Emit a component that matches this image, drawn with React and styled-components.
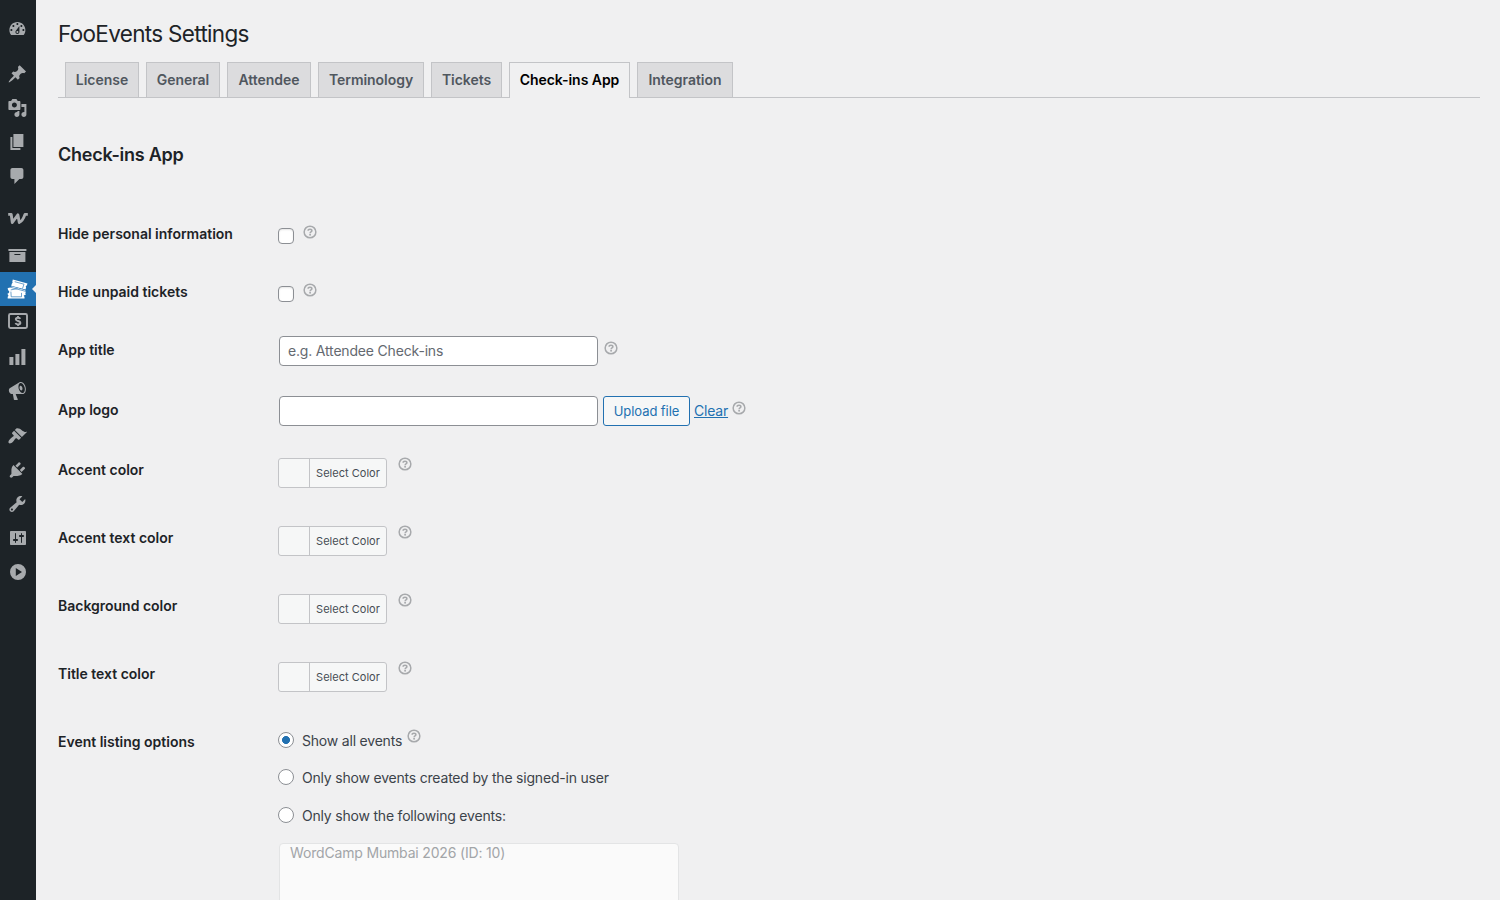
import React, { useState } from 'react'
import styled, { createGlobalStyle, css } from 'styled-components'

const GlobalStyle = createGlobalStyle`
    *, *::before, *::after{
        box-sizing: border-box;
    }
    body{
        margin: 0;
        height: 900px;
        overflow: hidden;
        background-color: #f0f0f1;
        color: #3c434a;
        font-family: Inter, "Liberation Sans", sans-serif;
        font-size: 14px;
        line-height: 1.4;
    }
`

const icons = {
    dashboard: 'M3.76 16h12.48c1.1-1.37 1.76-3.11 1.76-5 0-4.42-3.58-8-8-8s-8 3.58-8 8c0 1.89.66 3.63 1.76 5zM10 4c.55 0 1 .45 1 1s-.45 1-1 1-1-.45-1-1 .45-1 1-1zM6 6c.55 0 1 .45 1 1s-.45 1-1 1-1-.45-1-1 .45-1 1-1zm8 0c.55 0 1 .45 1 1s-.45 1-1 1-1-.45-1-1 .45-1 1-1zm-5.37 5.55L12 7v6c0 1.1-.9 2-2 2s-2-.9-2-2c0-.57.24-1.08.63-1.45zM4 10c.55 0 1 .45 1 1s-.45 1-1 1-1-.45-1-1 .45-1 1-1zm12 0c.55 0 1 .45 1 1s-.45 1-1 1-1-.45-1-1 .45-1 1-1zm-5 3c0-.55-.45-1-1-1s-1 .45-1 1 .45 1 1 1 1-.45 1-1z',
    posts: 'M10.44 3.02l1.82-1.82 6.36 6.35-1.83 1.82c-1.05-.68-2.48-.57-3.41.36l-.75.75c-.92.93-1.04 2.35-.35 3.41l-1.83 1.82-2.41-2.41-2.8 2.79c-.42.42-3.38 2.71-3.8 2.29s1.86-3.39 2.28-3.81l2.79-2.79L4.1 9.36l1.83-1.82c1.05.69 2.48.57 3.4-.36l.75-.75c.93-.92 1.05-2.35.36-3.41z',
    media: 'M13 11V4c0-.55-.45-1-1-1h-1.67L9 1H5L3.67 3H2c-.55 0-1 .45-1 1v7c0 .55.45 1 1 1h10c.55 0 1-.45 1-1zM7 4.5c1.38 0 2.5 1.12 2.5 2.5S8.38 9.5 7 9.500 4.500 8.380 4.500 7 5.620 4.500 7 4.500zM14 6h5v10.500c0 1.380-1.120 2.500-2.500 2.500S14 17.880 14 16.500s1.120-2.500 2.500-2.500c.170 0 .340.020.500.050V9h-3V6zm-4 8.050V13h2v3.500c0 1.380-1.120 2.500-2.500 2.500S7 17.880 7 16.500 8.120 14 9.500 14c.170 0 .340.020.500.050z',
    pages: 'M6 15V2h10v13H6zm-1 1h8v2H3V5h2v11z',
    comments: 'M5 2h9c1.1 0 2 .9 2 2v7c0 1.1-.9 2-2 2h-2l-5 5v-5H5c-1.1 0-2-.9-2-2V4c0-1.1.9-2 2-2z',
    products: 'M19 4v2H1V4h18zM2 7h16v10H2V7zm11 3V9H7v1h6z',
    analytics: 'M18 18V2h-4v16h4zm-6 0V7H8v11h4zm-6 0v-8H2v8h4z',
    marketing: 'M18.15 5.94c.46 1.62.38 3.22-.02 4.48-.42 1.28-1.26 2.18-2.3 2.48-.16.06-.26.06-.4.06-.06.02-.12.02-.18.02-.06.02-.14.02-.22.02h-6.8l2.22 5.5c.02.14-.06.26-.14.34-.08.1-.24.16-.34.16H6.95c-.1 0-.26-.06-.34-.16-.08-.08-.16-.2-.14-.34l-1-5.5H4.25l-.02-.02c-.5.06-1.08-.18-1.54-.62s-.88-1.08-1.06-1.88c-.24-.8-.2-1.56-.02-2.2.18-.62.58-1.08 1.06-1.3l.02-.02 9-5.4c.1-.06.18-.1.24-.16.06-.04.14-.08.24-.12.16-.08.28-.12.5-.18 1.04-.3 2.24.1 3.22.98s1.84 2.24 2.26 3.86zm-2.58 5.98h-.02c.4-.1.74-.34 1.04-.7.58-.7.86-1.76.86-3.04 0-.64-.1-1.3-.28-1.98-.34-1.36-1.02-2.5-1.78-3.24s-1.68-1.1-2.46-.88c-.82.22-1.4.96-1.7 2-.32 1.04-.28 2.36.06 3.72.38 1.36 1 2.5 1.8 3.24.78.74 1.62 1.1 2.48.88zm-2.54-7.08c.22-.04.42-.02.62.04.38.16.76.48 1.02 1s.42 1.2.42 1.78c0 .3-.04.56-.12.8-.18.48-.44.84-.86.94-.34.1-.8-.06-1.14-.4s-.64-.86-.78-1.5c-.18-.62-.12-1.24.02-1.72s.48-.84.82-.94z',
    appearance: 'M14.48 11.06L7.41 3.99l1.5-1.5c.5-.56 2.3-.47 3.51.32 1.21.8 1.43 1.28 2.91 2.1 1.18.64 2.45 1.26 4.45.85zm-.71.71L6.7 4.7 4.93 6.47c-.39.39-.39 1.02 0 1.41l1.06 1.06c.39.39.39 1.03 0 1.42-.6.6-1.43 1.11-2.21 1.69-.35.26-.7.53-1.01.84C1.43 14.23.4 16.08 1.4 17.07c.99 1 2.84-.03 4.18-1.36.31-.31.58-.66.85-1.02.57-.78 1.08-1.61 1.69-2.21.39-.39 1.02-.39 1.41 0l1.06 1.06c.39.39 1.02.39 1.41 0z',
    plugins: 'M13.11 4.36L9.87 7.6 8 5.73l3.24-3.24c.35-.34 1.05-.2 1.56.32.52.51.66 1.21.31 1.55zm-8 1.77l.91-1.12 9.01 9.01-1.19.84c-.71.71-2.63 1.16-3.82 1.16H6.14L4.9 17.26c-.59.59-1.54.59-2.12 0-.59-.58-.59-1.53 0-2.12l1.24-1.24v-3.88c0-1.13.4-3.19 1.09-3.89zm7.26 3.97l3.24-3.24c.34-.35 1.04-.21 1.55.31.52.51.66 1.21.31 1.55l-3.24 3.25z',
    tools: 'M16.68 9.77c-1.34 1.34-3.3 1.67-4.95.99l-5.41 6.52c-.99.99-2.59.99-3.58 0s-.99-2.59 0-3.57l6.52-5.42c-.68-1.65-.35-3.61.99-4.95 1.28-1.28 3.12-1.62 4.72-1.06l-2.89 2.89 2.82 2.82 2.86-2.87c.53 1.58.18 3.39-1.08 4.65zM3.81 16.21c.4.39 1.04.39 1.43 0 .4-.4.4-1.04 0-1.43-.39-.4-1.03-.4-1.43 0-.39.39-.39 1.03 0 1.43z',
    settings: 'M18 16V4c0-.55-.45-1-1-1H3c-.55 0-1 .45-1 1v12c0 .55.45 1 1 1h14c.55 0 1-.45 1-1zM8 11h1c.55 0 1 .45 1 1s-.45 1-1 1H8v1.5c0 .28-.22.5-.5.5s-.5-.22-.5-.5V13H6c-.55 0-1-.45-1-1s.45-1 1-1h1V5.5c0-.28.22-.5.5-.5s.5.22.5.5V11zm5-2h-1c-.55 0-1-.45-1-1s.45-1 1-1h1V5.5c0-.28.22-.5.5-.5s.5.22.5.5V7h1c.55 0 1 .45 1 1s-.45 1-1 1h-1v5.5c0 .28-.22.5-.5.5s-.5-.22-.5-.5V9z',
    collapse: 'M10 2a8 8 0 1 0 0 16 8 8 0 0 0 0-16zM7.8 5.9L14 10l-6.2 4.1z',
}

//every array is a block of the menu, blocks are split by a separator
const menu = [
    ['dashboard'],
    ['posts', 'media', 'pages', 'comments'],
    ['woo', 'products', 'tickets', 'payments', 'analytics', 'marketing'],
    ['appearance', 'plugins', 'tools', 'settings', 'collapse'],
]

//icons that sit a bit more to the right than the rest
const wideIcons = ['woo', 'payments', 'settings', 'collapse']

const tabs = [
    { name: 'License', width: 74 },
    { name: 'General', width: 74 },
    { name: 'Attendee', width: 84 },
    { name: 'Terminology', width: 106 },
    { name: 'Tickets', width: 71 },
    { name: 'Check-ins App', width: 121 },
    { name: 'Integration', width: 96 },
]

const colors = ['Accent color', 'Accent text color', 'Background color', 'Title text color']

const listing = [
    'Show all events',
    'Only show events created by the signed-in user',
    'Only show the following events:',
]

function WooIcon() {
    return (
        <svg width="20" height="20" viewBox="0 0 20 20" fill="none" stroke="currentColor" strokeWidth="2.9" strokeLinejoin="round">
            <path d="M.2 3.400H3.200L4.300 11.500 9.900 3.900 11.300 11.500C14 10.500 15.600 7.500 17 3.400H19.800" />
        </svg>
    )
}

function TicketsIcon() {
    return (
        <svg width="21" height="20" viewBox="0 0 21 20" fill="currentColor">
            <path d="M5.8.6l14.700 3.800-.7 2.100a1.200 1.200 0 0 0-.7 2l-.6 2L4.200 6.800l.7-2.200a1.300 1.300 0 0 0 .4-1.900z" />
            <path d="M.6 9.200L5 7.600l13.300 3.700.5 1.900a1.300 1.300 0 0 0 .2 2.100l-1.400 1L2 15.600l-.4-1.600a1.300 1.300 0 0 0-.4-2.400z" />
            <path d="M.7 14.300h16.800v1.100a1.300 1.300 0 0 0 0 2.300v1.700H.7v-1.700a1.300 1.300 0 0 0 0-2.300z" />
            <g fill="none" stroke="#2271b1" strokeWidth=".65">
                <path d="M7.700 2.700l9.300 2.500-1.500 4.300" />
                <path d="M2 7.900L18.800 12.400M3.700 10.900l7-1.300" />
                <path d="M3.900 12.600l.3 5.200h10.300v-3.900" />
            </g>
        </svg>
    )
}

function PaymentsIcon() {
    return (
        <svg width="20" height="16" viewBox="0 0 20 16" fill="none" stroke="currentColor">
            <rect x="1" y="1" width="18" height="14" rx="1.4" strokeWidth="1.9" />
            <path d="M12.300 5.900C12 5 11.200 4.700 10 4.700c-1.300 0-2.200.5-2.200 1.600 0 2.300 4.600 1.100 4.600 3.400 0 1.100-1 1.700-2.400 1.700-1.300 0-2.200-.5-2.500-1.400M10 3v1.700M10 11.400V13" strokeWidth="1.900" />
        </svg>
    )
}

function MenuIcon({ name }) {
    if (name === 'woo') return <WooIcon />
    if (name === 'tickets') return <TicketsIcon />
    if (name === 'payments') return <PaymentsIcon />
    return (
        <svg width="20" height="20" viewBox={wideIcons.includes(name) ? '0 0 20 20' : '-.4 0 20 20'} fill="currentColor" fillRule="evenodd">
            <path d={icons[name]} />
        </svg>
    )
}

function HelpTip() {
    return (
        <HelpStyled width="14" height="14" viewBox="0 0 14 14" fill="none" stroke="currentColor">
            <circle cx="7" cy="7" r="5.85" strokeWidth="1.5" />
            <path d="M5.100 5.800C5.100 4.700 5.900 4.200 7 4.200s1.900.6 1.900 1.500c0 1.200-1.800 1.300-1.800 2.500" strokeWidth="1.500" />
            <circle cx="7.100" cy="9.800" r=".95" fill="currentColor" stroke="none" />
        </HelpStyled>
    )
}

function App() {
    //state
    const [activeTab, setActiveTab] = useState('Check-ins App')
    const [selected, setSelected] = useState(0)

    return (
        <AppStyled>
            <GlobalStyle />
            <Sidebar>
                {menu.map((block, index) => (
                    <MenuBlock key={index}>
                        {block.map((name) => (
                            <MenuItem key={name} $active={name === 'tickets'} $name={name}>
                                <MenuIcon name={name} />
                            </MenuItem>
                        ))}
                    </MenuBlock>
                ))}
            </Sidebar>
            <Content>
                <Heading>FooEvents Settings</Heading>
                <Tabs>
                    {tabs.map(({ name, width }) => (
                        <Tab key={name} $width={width} $active={name === activeTab} onClick={() => setActiveTab(name)}>
                            {name}
                        </Tab>
                    ))}
                </Tabs>
                <SectionTitle>Check-ins App</SectionTitle>

                <Row $height={58}>
                    <Label>Hide personal information</Label>
                    <Field><Checkbox type="checkbox" /><HelpTip /></Field>
                </Row>
                <Row $height={58}>
                    <Label>Hide unpaid tickets</Label>
                    <Field><Checkbox type="checkbox" /><HelpTip /></Field>
                </Row>
                <Row $height={60}>
                    <Label>App title</Label>
                    <Field $gap={6}>
                        <TextInput type="text" placeholder="e.g. Attendee Check-ins" />
                        <HelpTip />
                    </Field>
                </Row>
                <Row $height={60}>
                    <Label>App logo</Label>
                    <Field $gap={4}>
                        <TextInput type="text" />
                        <UploadButton type="button">Upload file</UploadButton>
                        <ClearLink href="#">Clear</ClearLink>
                        <HelpTip />
                    </Field>
                </Row>
                {colors.map((name) => (
                    <Row $height={68} key={name}>
                        <Label>{name}</Label>
                        <Field $gap={11}>
                            <ColorButton type="button"><span>Select Color</span></ColorButton>
                            <HelpTip />
                        </Field>
                    </Row>
                ))}
                <Row $height={187}>
                    <Label>Event listing options</Label>
                    <Options>
                        {listing.map((text, index) => (
                            <Option key={text}>
                                <Radio type="radio" name="listing" checked={selected === index} onChange={() => setSelected(index)} />
                                <span>{text}</span>
                                {index === 0 && <HelpTip />}
                            </Option>
                        ))}
                        <EventList>WordCamp Mumbai 2026 (ID: 10)</EventList>
                    </Options>
                </Row>
            </Content>
        </AppStyled>
    )
}

const AppStyled = styled.div`
    display: flex;
    height: 900px;
    overflow: hidden;
`

const Sidebar = styled.nav`
    width: 36px;
    flex: none;
    padding-top: 12px;
    display: flex;
    flex-direction: column;
    gap: 11px;
    background-color: #1d2327;
`

const MenuBlock = styled.div`
    display: flex;
    flex-direction: column;
`

const MenuItem = styled.a`
    position: relative;
    height: 34px;
    display: flex;
    align-items: center;
    padding-left: ${({ $name }) => wideIcons.includes($name) ? 8 : 7}px;
    color: #a7aaad;
    svg{
        display: block;
        flex: none;
        ${({ $name }) => $name === 'payments' && css`margin-top: -4px;`}
    }
    ${({ $active }) => $active && css`
        background-color: #2271b1;
        color: #fff;
        &::after{
            content: '';
            position: absolute;
            right: 0;
            top: 13px;
            border: 4px solid transparent;
            border-left-width: 0;
            border-right-color: #f0f0f1;
        }
    `}
`

const Content = styled.main`
    flex: 1;
    padding: 19px 20px 0 22px;
`

const Heading = styled.h1`
    margin: 0;
    height: 43px;
    font-size: 22.5px;
    font-weight: 400;
    line-height: 30px;
    letter-spacing: -.68px;
    color: #1d2327;
`

const Tabs = styled.div`
    display: flex;
    gap: 7px;
    height: 36px;
    padding-left: 7px;
    border-bottom: 1px solid #c3c4c7;
`

const Tab = styled.button`
    width: ${({ $width }) => $width}px;
    height: 35px;
    padding: 0;
    border: 1px solid #c3c4c7;
    border-bottom: none;
    background-color: #dcdcde;
    color: #50575e;
    font: 600 14px/24px Inter, sans-serif;
    letter-spacing: -.04px;
    white-space: nowrap;
    cursor: pointer;
    ${({ $active }) => $active && css`
        height: 36px;
        padding-bottom: 1px;
        background-color: #f0f0f1;
        color: #000;
    `}
`

const SectionTitle = styled.h2`
    margin: 0;
    height: 107px;
    padding-top: 45px;
    font-size: 18px;
    font-weight: 600;
    line-height: 24px;
    letter-spacing: -.25px;
    color: #1d2327;
`

const Row = styled.div`
    display: grid;
    grid-template-columns: 220px 1fr;
    height: ${({ $height }) => $height}px;
`

const Label = styled.div`
    padding-top: 20px;
    font-weight: 600;
    line-height: 18px;
    letter-spacing: -.01px;
    color: #1d2327;
`

const Field = styled.div`
    display: flex;
    align-items: flex-start;
    gap: ${({ $gap }) => $gap ?? 9}px;
    padding-top: 15px;
`

const HelpStyled = styled.svg`
    flex: none;
    margin-top: 5px;
    color: #a7a9ac;
`

const box = css`
    appearance: none;
    margin: 0;
    border: 1px solid #8c8f94;
    background-color: #fff;
`

const Checkbox = styled.input`
    ${box}
    width: 16px;
    height: 16px;
    margin-top: 8px;
    border-radius: 4px;
    box-shadow: inset 0 1px 2px rgba(0, 0, 0, .1);
`

const TextInput = styled.input`
    ${box}
    width: 319px;
    height: 30px;
    margin-left: 1px;
    padding: 0 8px 2px;
    border-radius: 4px;
    font: 400 14px/26px Inter, sans-serif;
    letter-spacing: -.18px;
    &::placeholder{
        color: #646970;
        opacity: 1;
    }
`

const UploadButton = styled.button`
    width: 87px;
    height: 30px;
    margin-left: 1px;
    padding: 1px 0 0;
    border: 1px solid #2271b1;
    border-radius: 3px;
    background-color: #f6f7f7;
    color: #2271b1;
    font: 400 13px/27px Inter, sans-serif;
    letter-spacing: -.06px;
    cursor: pointer;
`

const ClearLink = styled.a`
    color: #2271b1;
    line-height: 30px;
    letter-spacing: -.2px;
`

const ColorButton = styled.button`
    display: flex;
    width: 109px;
    height: 30px;
    margin-top: 2px;
    padding: 0 0 0 30px;
    border: 1px solid #c3c4c7;
    border-radius: 3px;
    background-color: #f6f7f7;
    color: #464d54;
    cursor: pointer;
    & + svg{
        margin-top: 1px;
    }
    span{
        flex: 1;
        border-left: 1px solid #c3c4c7;
        font: 400 11px/28px Inter, sans-serif;
        letter-spacing: .02px;
        white-space: nowrap;
    }
`

const Options = styled.div`
    display: flex;
    flex-direction: column;
    padding-top: 8px;
`

const Option = styled.label`
    display: flex;
    align-items: center;
    height: 37.5px;
    letter-spacing: -.2px;
    span{
        margin: 2px 5px 0 8px;
    }
    svg{
        margin-top: -7px;
    }
`

const Radio = styled.input`
    ${box}
    width: 16px;
    height: 16px;
    border-radius: 50%;
    &:checked{
        background-image: radial-gradient(circle, #2271b1 3.7px, transparent 4.2px);
    }
`

const EventList = styled.div`
    width: 400px;
    height: 80px;
    margin: 9px 0 0 1px;
    padding: 0 10px;
    border: 1px solid #e3e4e5;
    border-radius: 4px;
    background-color: #fafafa;
    color: #a2a5a8;
    line-height: 18px;
    letter-spacing: -.17px;
`

export default App
